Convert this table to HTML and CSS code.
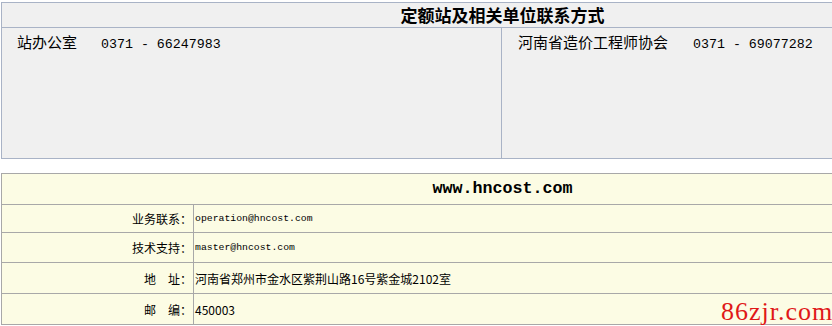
FILE: index.html
```html
<!DOCTYPE html>
<html lang="zh-CN">
<head>
<meta charset="utf-8">
<title>定额站及相关单位联系方式</title>
<link rel="stylesheet" href="styles.css">
</head>
<body>
<div class="frame">
<section class="contacts">
  <div class="contacts-title">定额站及相关单位联系方式</div>
  <div class="contacts-body">
    <div class="contact-cell"><span class="cname">站办公室</span><span class="phone">0371 - 66247983</span></div>
    <div class="contact-cell right"><span class="cname">河南省造价工程师协会</span><span class="phone">0371 - 69077282</span></div>
  </div>
</section>

<section class="site">
  <div class="site-title">www.hncost.com</div>
  <div class="site-row r1"><div class="label">业务联系：</div><div class="value mono">operation@hncost.com</div></div>
  <div class="site-row r2"><div class="label">技术支持：</div><div class="value mono">master@hncost.com</div></div>
  <div class="site-row r3"><div class="label">地<span class="sp"></span>址：</div><div class="value">河南省郑州市金水区紫荆山路16号紫金城2102室</div></div>
  <div class="site-row r4"><div class="label">邮<span class="sp"></span>编：</div><div class="value">450003</div></div>
</section>

<div class="watermark">86zjr.com</div>
</div>
</body>
</html>
```

FILE: styles.css
```css
html, body {
  overflow: hidden;
}
body {
  margin: 0;
  background: #ffffff;
  font-family: "Noto Sans CJK SC", "Liberation Sans", sans-serif;
  color: #000;
}
.frame {
  position: relative;
  width: 832px;
  height: 326px;
  overflow: hidden;
  padding: 2px 0 0 1px;
  box-sizing: border-box;
}

.contacts {
  width: 1001px;
  border: 1px solid #a9b3c6;
  background: #f0f0f0;
}
.contacts-title {
  height: 24px;
  line-height: 23px;
  text-align: center;
  font-size: 17px;
  font-weight: bold;
  border-bottom: 1px solid #a9b3c6;
}
.contacts-body {
  display: grid;
  grid-template-columns: 499px 1fr;
  height: 130px;
}
.contact-cell {
  padding: 4px 0 0 15px;
  font-size: 15px;
  line-height: 20px;
  display: flex;
  align-items: baseline;
}
.contact-cell.right {
  border-left: 1px solid #a9b3c6;
  padding-left: 16px;
}
.cname {
  margin-right: 24px;
}
.contact-cell.right .cname {
  margin-right: 25px;
}
.phone {
  font-family: "Liberation Mono", monospace;
  font-size: 13.3px;
}

.site {
  margin-top: 14px;
  width: 1001px;
  border: 1px solid #a8a8a8;
  background: #fcfce4;
}
.site-title {
  height: 30px;
  line-height: 30px;
  text-align: center;
  font-family: "Liberation Mono", monospace;
  font-weight: bold;
  font-size: 16.7px;
  border-bottom: 1px solid #a8a8a8;
}
.site-row {
  display: grid;
  grid-template-columns: 192px 1fr;
  border-bottom: 1px solid #a8a8a8;
  font-size: 12px;
}
.site-row:last-child {
  border-bottom: none;
}
.r1 { height: 27px; }
.r2 { height: 29px; }
.r3 { height: 30px; }
.r4 { height: 30px; }
.label {
  text-align: right;
  padding-right: 1px;
  border-right: 1px solid #a8a8a8;
  display: flex;
  align-items: center;
  justify-content: flex-end;
}
.sp {
  display: inline-block;
  width: 12px;
}
.value {
  display: flex;
  align-items: center;
  padding-left: 1px;
}
.value.mono {
  font-family: "Liberation Mono", monospace;
  font-size: 9.8px;
}

.watermark {
  position: absolute;
  left: 721px;
  top: 298px;
  font-family: "Liberation Serif", "DejaVu Serif", serif;
  font-size: 26px;
  color: #e01818;
  letter-spacing: 1px;
  line-height: 28px;
  white-space: nowrap;
}
```
